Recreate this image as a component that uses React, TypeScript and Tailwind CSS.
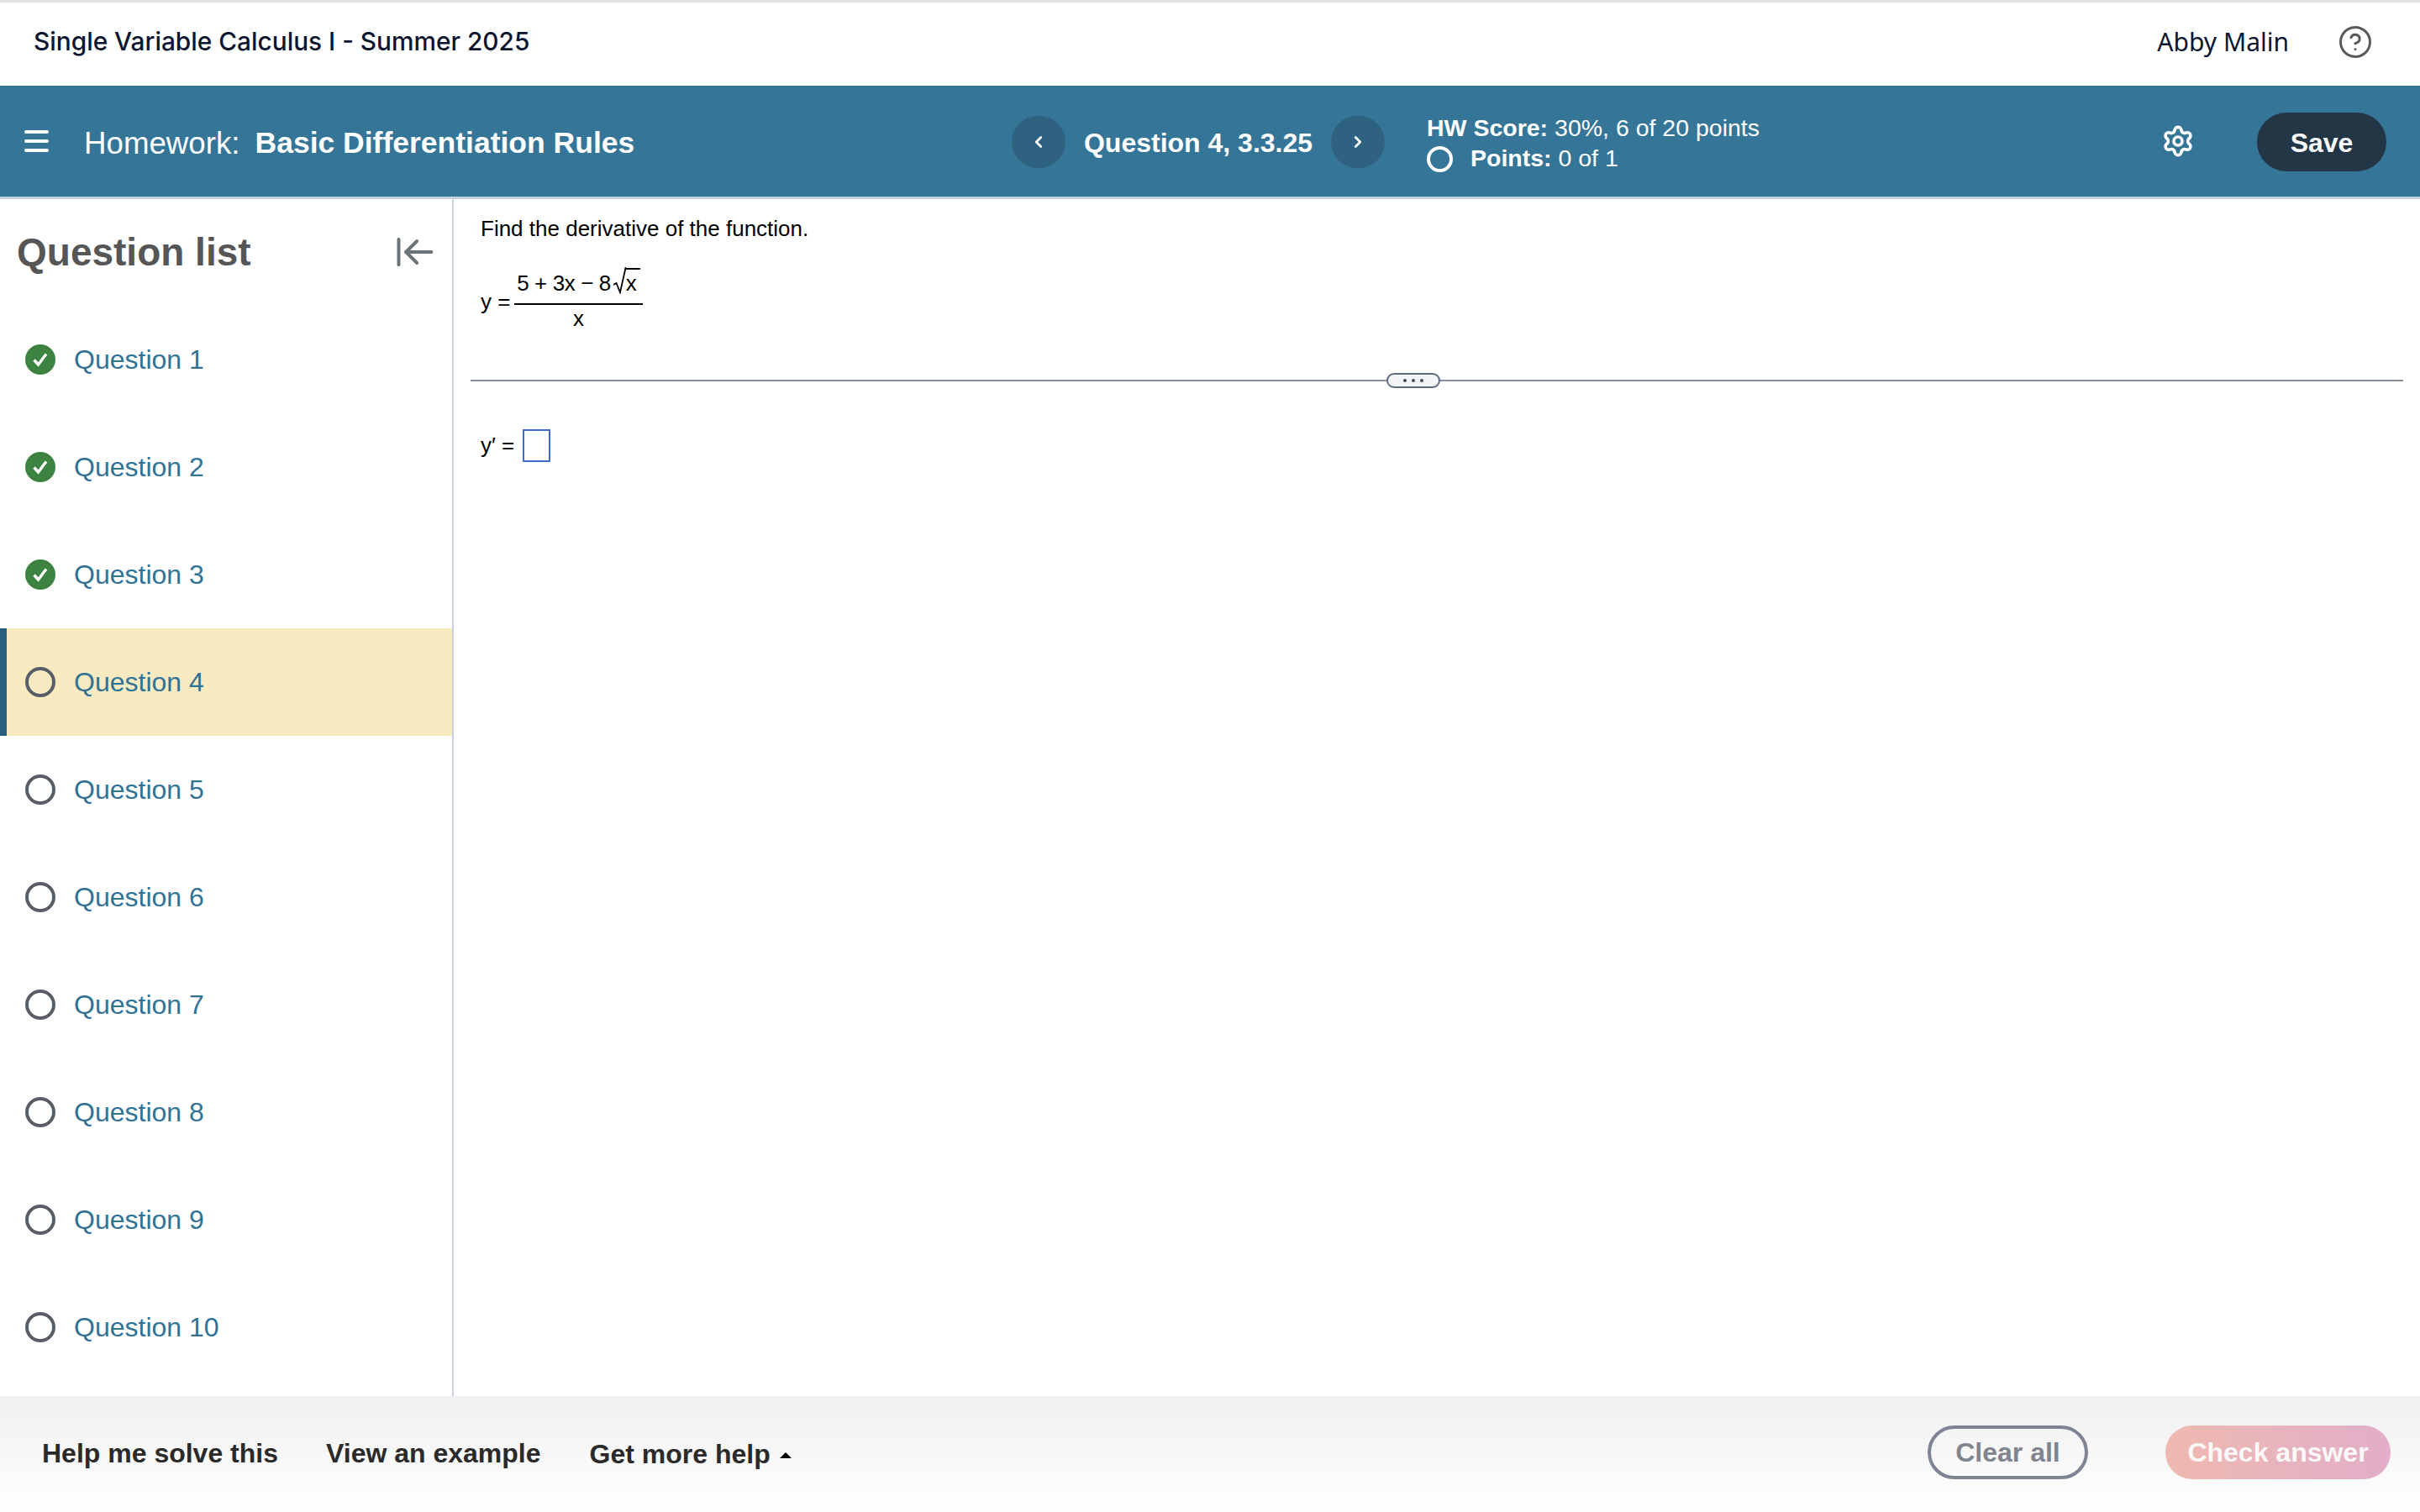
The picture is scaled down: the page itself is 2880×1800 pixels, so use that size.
import React from "react";
import { Settings, CircleHelp, ChevronLeft, ChevronRight, ArrowLeftToLine } from "lucide-react";

const questions = [1, 2, 3, 4, 5, 6, 7, 8, 9, 10];
const helvetica = "font-['Liberation_Sans',Arial,sans-serif]";

const StatusIcon = ({ done }: { done: boolean }) =>
  done ? (
    <svg width="36" height="36" viewBox="0 0 36 36" className="shrink-0">
      <circle cx="18" cy="18" r="18" fill="#3c8341" />
      <path d="M10.5 18.5 L15.5 24 L25 11.5" fill="none" stroke="#fff" strokeWidth="3.4" />
    </svg>
  ) : (
    <span className="w-[36px] h-[36px] rounded-full border-[4px] border-[#565f69] shrink-0" />
  );

const QuestionRow = ({ n }: { n: number }) => {
  const active = n === 4;
  return (
    <div
      className={`h-[128px] flex items-center gap-[22px] ${
        active ? "bg-[#f7eac1] border-l-[8px] border-[#285f7d] pl-[22px]" : "pl-[30px]"
      }`}
    >
      <StatusIcon done={n < 4} />
      <span className="text-[32px] leading-none text-[#2f7396]">Question {n}</span>
    </div>
  );
};

const Fraction = () => (
  <div className="flex items-center mt-[29px] text-[26px] leading-none text-black">
    <span className="w-[40px] mt-[-2px]">y =</span>
    <div className="w-[153px] flex flex-col items-center">
      <div className="h-[44px] flex items-end pb-[11px]">
        <span className="tracking-[-0.4px]">5 + 3x − 8</span>
        <span className="flex items-end ml-[3px]">
          <svg width="15" height="32" viewBox="0 0 15 32" className="-mr-px">
            <path d="M0 21 L3.5 19 L8 30 L14.5 1 H15" fill="none" stroke="#000" strokeWidth="1.8" />
          </svg>
          <span className="border-t-2 border-black pr-[4px] pl-[1px] pt-[3px]">x</span>
        </span>
      </div>
      <div className="w-full h-[2px] bg-black" />
      <div className="h-[40px] pt-[3px]">x</div>
    </div>
  </div>
);

export default function App() {
  return (
    <div className={`w-[2880px] h-[1800px] flex flex-col bg-white overflow-hidden ${helvetica}`}>
      <header className="h-[102px] shrink-0 border-t-[3px] border-[#e2e2e2] flex items-center pl-[40px] pr-[56px] pb-[6px] text-[#0c1630] font-['Noto_Sans',sans-serif]">
        <span className="text-[29.8px] font-medium font-['Inter',sans-serif]">Single Variable Calculus I - Summer 2025</span>
        <span className="ml-auto text-[30px]">Abby Malin</span>
        <CircleHelp className="ml-[58px] w-[42px] h-[42px] text-[#5a5a5a]" strokeWidth={1.7} />
      </header>

      <div className="h-[135px] shrink-0 bg-[#357698] border-b-[3px] border-[#c6d1df] pt-[2px] flex items-center text-white">
        <div className="w-[1204px] shrink-0 flex items-center pl-[29px] pt-[4px]">
          <div className="w-[29px] flex flex-col gap-[7.5px] mt-[-6px]">
            <span className="h-[3.5px] bg-white rounded-sm" />
            <span className="h-[3.5px] bg-white rounded-sm" />
            <span className="h-[3.5px] bg-white rounded-sm" />
          </div>
          <span className="ml-[42px] text-[36.7px]">Homework:</span>
          <span className="ml-[18px] text-[35.5px] font-bold">Basic Differentiation Rules</span>
        </div>
        <button className="w-[64px] h-[62px] rounded-full bg-[#2e6280] flex items-center justify-center">
          <ChevronLeft className="w-[22px] h-[22px]" strokeWidth={3} />
        </button>
        <span className="w-[316px] text-center text-[32px] font-bold mt-[2px]">Question 4, 3.3.25</span>
        <button className="w-[64px] h-[62px] rounded-full bg-[#2e6280] flex items-center justify-center">
          <ChevronRight className="w-[22px] h-[22px]" strokeWidth={3} />
        </button>
        <div className="ml-[50px] flex flex-col text-[28.5px] leading-[36px] pt-[1px]">
          <div>
            <b>HW Score:</b> 30%, 6 of 20 points
          </div>
          <div className="flex items-center">
            <span className="w-[31px] h-[31px] rounded-full border-[4px] border-white mt-[3px]" />
            <span className="ml-[21px]">
              <b>Points:</b> 0 of 1
            </span>
          </div>
        </div>
        <Settings className="ml-auto w-[40px] h-[40px] mt-[-3px]" strokeWidth={2.2} />
        <button className="ml-[74px] mr-[40px] w-[154px] h-[70px] pt-[2px] rounded-full bg-[#233645] text-[32px] font-bold text-[#f8f9fd]">
          Save
        </button>
      </div>

      <div className="flex-1 flex min-h-0">
        <aside className="w-[540px] shrink-0 border-r-[2px] border-[#c9d1df] flex flex-col">
          <div className="h-[127px] flex items-center justify-between pl-[20px] pr-[18px]">
            <span className="text-[46px] font-bold text-[#565656]">Question list</span>
            <ArrowLeftToLine className="w-[52px] h-[52px] text-[#6a7378] mt-[-2px]" strokeWidth={1.8} />
          </div>
          {questions.map((n) => (
            <QuestionRow key={n} n={n} />
          ))}
        </aside>

        <main className="flex-1 pt-[19px] pl-[20px] pr-[20px]">
          <div className="pl-[12px]">
            <p className="text-[26px] leading-[32px] text-black">Find the derivative of the function.</p>
            <Fraction />
          </div>
          <div className="relative mt-[49px] h-[2px] bg-[#87909f]">
            <span className="absolute left-[1090px] top-[-8px] w-[64px] h-[18px] rounded-full border-[2.5px] border-[#5c6b7c] bg-[#f3f4f6] flex items-center justify-center gap-[6px]">
              <span className="w-[4px] h-[4px] rounded-full bg-[#444c55]" />
              <span className="w-[4px] h-[4px] rounded-full bg-[#444c55]" />
              <span className="w-[4px] h-[4px] rounded-full bg-[#444c55]" />
            </span>
          </div>
          <div className="pl-[12px] mt-[57px] flex items-center text-[26px] text-black">
            <span className="w-[50px]">y′ =</span>
            <span className="w-[33px] h-[39px] border-[2px] border-[#3f6bc8]" />
          </div>
        </main>
      </div>

      <footer className="h-[138px] shrink-0 bg-gradient-to-b from-[#f0f0f0] to-white flex items-center pl-[50px] pr-[35px] pb-[4px] text-[#2a2a2a] text-[32px] font-bold">
        <span className="mt-[2px]">Help me solve this</span>
        <span className="ml-[57px] mt-[2px]">View an example</span>
        <span className="ml-[58px] mt-[4px]">Get more help</span>
        <span className="ml-[11px] mt-[6px] w-0 h-0 border-x-[7px] border-x-transparent border-b-[7px] border-b-black" />
        <button className="ml-auto w-[191px] h-[64px] rounded-full border-[4px] border-[#7e8494] text-[32px] text-[#80858f]">
          Clear all
        </button>
        <button className="ml-[92px] w-[268px] h-[64px] rounded-full bg-gradient-to-r from-[#efb9b0] to-[#e2aec9] text-[32px] text-[#fbf8f9]">
          Check answer
        </button>
      </footer>
    </div>
  );
}
